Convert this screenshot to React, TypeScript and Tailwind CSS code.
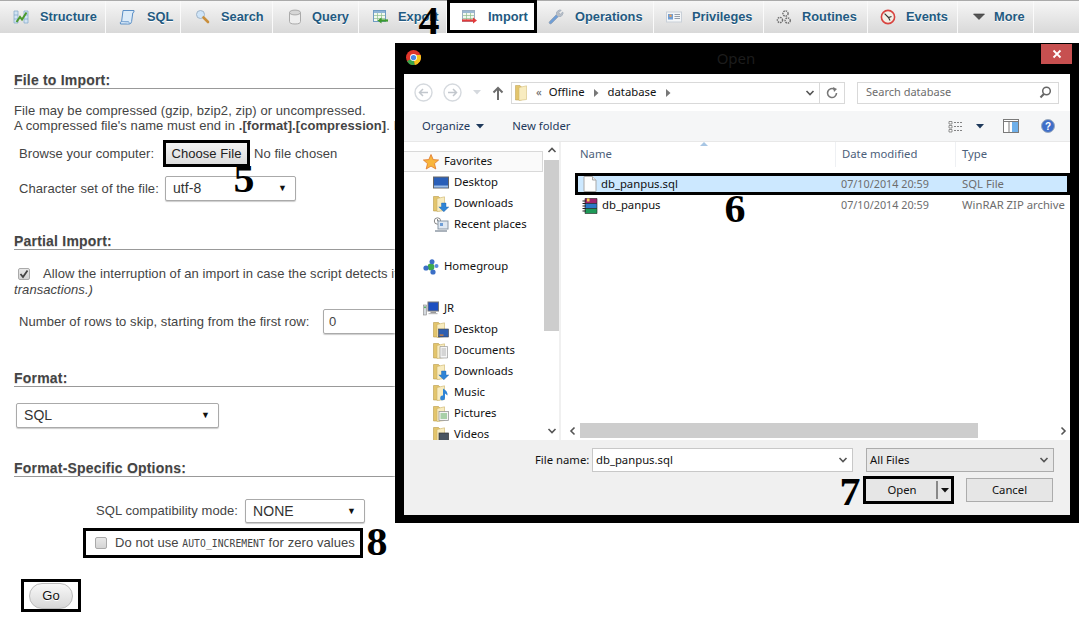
import React from "react";

const Sv = ({ w = 16, h = 16, children, className = "" }: { w?: number; h?: number; children: React.ReactNode; className?: string }) => (
  <svg width={w} height={h} viewBox={`0 0 ${w} ${h}`} className={`shrink-0 ${className}`}>{children}</svg>
);

const TableBase = ({ c = "#7a9cbc", head = "#8fb4d6" }: { c?: string; head?: string }) => (
  <>
    <rect x="1.5" y="1.5" width="12" height="11" fill="#f2f8ee" stroke={c} />
    <rect x="2" y="2" width="11" height="2" fill={head} />
    <path d="M2 6.5H13M2 9.5H13M5.5 4V12M9.5 4V12" stroke="#8fbf8f" strokeWidth="0.7" />
  </>
);

const tabIcons: Record<string, React.ReactNode> = {
  Structure: (
    <Sv>
      <path d="M1 2H5V14H1ZM11 2H15V14H11Z" fill="#d3e4f3" stroke="#7fa6c9" strokeWidth="0.7" />
      <path d="M1 6H5M1 10H5M11 6H15M11 10H15" stroke="#7fa6c9" strokeWidth="0.7" />
      <path d="M3.5 13L7 8L9 10.5L13.5 3.5" fill="none" stroke="#4b9a2c" strokeWidth="2" />
    </Sv>
  ),
  SQL: (
    <Sv>
      <path d="M4 1.5H15Q15.5 3.5 13.8 3.8L12.6 12.5Q12.2 15 10.2 15H1.5Q0.5 13 2.6 12.6Z" fill="#dcebf8" stroke="#5a8fc6" />
      <path d="M2.6 12.6H9.5Q10.5 13.5 10 15" fill="#c3daf0" stroke="#5a8fc6" strokeWidth="0.7" />
    </Sv>
  ),
  Search: (
    <Sv>
      <circle cx="5.5" cy="5.5" r="4" fill="#cfe4f7" stroke="#9fb4c8" />
      <path d="M8.5 8.5L13 13" stroke="#c98f3c" strokeWidth="2.6" strokeLinecap="round" />
    </Sv>
  ),
  Query: (
    <Sv>
      <path d="M2.5 3.5V12.5Q2.5 15 8 15T13.5 12.5V3.5Z" fill="#eeeeee" stroke="#aaaaaa" />
      <ellipse cx="8" cy="3.5" rx="5.5" ry="2.4" fill="#d6d6d6" stroke="#aaaaaa" />
    </Sv>
  ),
  Export: (
    <Sv>
      <TableBase c="#6f9cc4" head="#8fb4d6" />
      <path d="M16 11.5H8" stroke="#3d9a2e" strokeWidth="2.2" />
      <path d="M9.5 8.5L5.5 11.5L9.5 14.5Z" fill="#3d9a2e" />
    </Sv>
  ),
  Import: (
    <Sv>
      <TableBase c="#9aaec2" head="#9cb8d2" />
      <path d="M1 11.5H12" stroke="#e23b3b" strokeWidth="2.2" />
      <path d="M12 8.5L16 11.5L12 14.5Z" fill="#e23b3b" />
    </Sv>
  ),
  Operations: (
    <Sv>
      <path d="M1.5 14.5Q0.5 13.5 1.8 12.2L8.2 5.8Q8 2 11.5 1L13.2 1.2L10.6 3.8L12.2 5.4L14.8 3L15 4.8Q14 8 10.2 7.8L3.8 14.2Q2.6 15.5 1.5 14.5Z" fill="#6f9ed6" stroke="#8b97a6" strokeWidth="0.6" />
      <path d="M8.2 5.8Q8 2 11.5 1L13.2 1.2L10.6 3.8L12.2 5.4L14.8 3L15 4.8Q14 8 10.2 7.8Z" fill="#b9bec5" />
    </Sv>
  ),
  Privileges: (
    <Sv>
      <rect x="0.5" y="3" width="15" height="10" fill="#f4f6f8" stroke="#c9d0d8" />
      <rect x="2" y="5" width="5" height="5.5" fill="#6f9ed6" />
      <circle cx="4.5" cy="6.8" r="1.3" fill="#e8a05c" />
      <path d="M8.5 5.5H14M8.5 7.5H14M8.5 9.5H14" stroke="#8a94a0" strokeWidth="0.9" />
    </Sv>
  ),
  Routines: (
    <Sv>
      <g fill="none" stroke="#6e6e6e">
        <circle cx="9.5" cy="4.5" r="2.6" strokeDasharray="1.6 0.8" strokeWidth="1.4" />
        <circle cx="4" cy="11" r="2.6" strokeDasharray="1.6 0.8" strokeWidth="1.4" />
        <circle cx="11.7" cy="11.5" r="2.6" strokeDasharray="1.6 0.8" strokeWidth="1.4" />
      </g>
    </Sv>
  ),
  Events: (
    <Sv>
      <circle cx="8" cy="8" r="6.6" fill="#f3efe6" stroke="#d8433f" strokeWidth="1.6" />
      <path d="M4.6 4.6L8.5 8.5L11.5 7.5M8.5 8.5L10 11.5" fill="none" stroke="#333" strokeWidth="1.1" />
    </Sv>
  ),
  More: (
    <Sv h={10} w={14}>
      <path d="M1.5 2H12.5L7 7.5Z" fill="#555" stroke="#333" strokeWidth="0.6" />
    </Sv>
  ),
};

const Tab = ({ name, className, gap = "gap-[11px]" }: { name: string; className: string; gap?: string }) => (
  <div className={`flex items-center ${gap} h-full border-r border-[#fafafa] shrink-0 ${className}`}>
    {tabIcons[name]}
    <span className="font-bold text-[12.8px] text-[#235a81] [text-shadow:0_1px_0_#fff]">{name}</span>
  </div>
);

const Heading = ({ children, className }: { children: string; className: string }) => (
  <div className={`h-[18px] border-b border-[#999] font-bold text-[14px] tracking-[0.2px] leading-[18px] text-[#444] [text-shadow:0_1px_0_#ddd] ${className}`}>{children}</div>
);

const Caret = () => <span className="text-[#111] text-[9px] leading-none">▼</span>;

const Sel = ({ value, className }: { value: string; className: string }) => (
  <div className={`flex items-center justify-between border border-[#aaa] rounded-[2px] bg-white shadow-[0_1px_1px_#ccc] pl-[7px] pr-[8px] text-[14px] text-[#333] ${className}`}>
    <span>{value}</span>
    <Caret />
  </div>
);

const Check = ({ checked, className = "" }: { checked?: boolean; className?: string }) => (
  <span className={`flex items-center justify-center w-[12px] h-[12px] shrink-0 rounded-[2px] border border-[#aaa] bg-gradient-to-b from-[#e8e8e8] to-[#d4d4d4] ${className}`}>
    {checked && (
      <svg width="10" height="10" viewBox="0 0 10 10"><path d="M1.5 5L4 8L8.5 1.5" fill="none" stroke="#444" strokeWidth="1.8" /></svg>
    )}
  </span>
);

const Folder = ({ badge }: { badge?: React.ReactNode }) => (
  <Sv w={16} h={16}>
    <path d="M0.5 0.5H5.5L7 2V15H0.5Z" fill="#e3c56c" stroke="#b89a4a" strokeWidth="0.6" />
    <path d="M4 2.5L11.5 0.8V14.5L4 15.5Z" fill="#f8ecc0" stroke="#cdb469" strokeWidth="0.6" />
    {badge}
  </Sv>
);

const arrowBadge = <path d="M8.5 7H13V11H15.8L10.8 15.8L5.8 11H8.5Z" fill="#2f84d6" stroke="#1e5fa8" strokeWidth="0.4" />;

const NavItem = ({ icon, label, sub = true, className = "" }: { icon: React.ReactNode; label: string; sub?: boolean; className?: string }) => (
  <div className={`h-[21px] flex items-center shrink-0 ${sub ? "pl-[29px] gap-[5px]" : "pl-[19px] gap-[5px]"} ${className}`}>
    {icon}
    <span className="text-[11.3px] text-[#111] whitespace-nowrap">{label}</span>
  </div>
);

const ScrollChevron = ({ dir }: { dir: "up" | "down" | "left" | "right" }) => {
  const d = { up: "M1.5 6L5 2.5L8.5 6", down: "M1.5 3L5 6.5L8.5 3", left: "M6.5 1.5L3 5L6.5 8.5", right: "M3.5 1.5L7 5L3.5 8.5" }[dir];
  return (
    <svg width="10" height="10" viewBox="0 0 10 10" className="shrink-0"><path d={d} fill="none" stroke="#555" strokeWidth="1.6" /></svg>
  );
};

const Digit = ({ children, className }: { children: string; className: string }) => (
  <span className={`absolute font-bold text-black text-[40px] leading-none scale-x-105 [font-family:'Liberation_Serif',serif] ${className}`}>{children}</span>
);

const Dialog = () => (
  <div className="absolute left-[395px] top-[43px] w-[684px] h-[480px] bg-black flex flex-col pl-[9px] pr-[9px] pb-[8px] [font-family:'Noto_Sans',sans-serif] shadow-[0_0_3px_#fff]">
    {/* title */}
    <div className="h-[31px] shrink-0 flex items-start relative">
      <svg width="15" height="15" viewBox="0 0 16 16" className="mt-[7px] ml-[2px] mr-[2px] shrink-0">
        <circle cx="8" cy="8" r="8" fill="#e0352b" />
        <path d="M8 8L1 12A8 8 0 0 0 9.5 15.9Z" fill="#3aa54a" />
        <path d="M8 8L9.5 15.9A8 8 0 0 0 15.5 5.3H8Z" fill="#f6c51b" />
        <circle cx="8" cy="8" r="3.7" fill="#fff" />
        <circle cx="8" cy="8" r="2.8" fill="#4a86e8" />
      </svg>
      <div className="flex-1 text-center text-[15px] text-[#1c1c1c] pt-[4px] pl-[8px]">Open</div>
      <div className="w-[31px] h-[20px] mt-[1px] -mr-[2px] bg-[#c75050] flex items-center justify-center">
        <svg width="10" height="10" viewBox="0 0 10 10"><path d="M1.5 1.5L8.5 8.5M8.5 1.5L1.5 8.5" stroke="#fff" strokeWidth="1.8" /></svg>
      </div>
    </div>
    {/* nav */}
    <div className="h-[37px] shrink-0 bg-white flex items-center pl-[10px]">
      <svg width="19" height="19" viewBox="0 0 19 19" className="shrink-0"><circle cx="9.5" cy="9.5" r="8.5" fill="#fff" stroke="#d5d9de" strokeWidth="1.4" /><path d="M14 9.5H5.5M9 6L5.5 9.5L9 13" fill="none" stroke="#c2c7cd" strokeWidth="1.5" /></svg>
      <svg width="19" height="19" viewBox="0 0 19 19" className="ml-[10px] shrink-0"><circle cx="9.5" cy="9.5" r="8.5" fill="#fff" stroke="#d5d9de" strokeWidth="1.4" /><path d="M5 9.5H13.5M10 6L13.5 9.5L10 13" fill="none" stroke="#c2c7cd" strokeWidth="1.5" /></svg>
      <svg width="8" height="5" viewBox="0 0 8 5" className="ml-[11px] shrink-0"><path d="M0 0H8L4 4.5Z" fill="#d5d9de" /></svg>
      <svg width="12" height="14" viewBox="0 0 12 14" className="ml-[11px] shrink-0"><path d="M6 14V2M1.5 6.5L6 2L10.5 6.5" fill="none" stroke="#6d6d6d" strokeWidth="2" /></svg>
      <div className="ml-[7px] w-[334px] h-[22px] border border-[#d9d9d9] flex items-center text-[11.3px] text-[#111] shrink-0">
        <svg width="14" height="16" viewBox="0 0 14 16" className="ml-[3px] shrink-0"><path d="M0.5 0.5H5L6.5 2V15H0.5Z" fill="#e3c56c" stroke="#b89a4a" strokeWidth="0.5" /><path d="M4 2.5L11.5 0.8V14.5L4 15.5Z" fill="#f8ecc0" stroke="#cdb469" strokeWidth="0.5" /></svg>
        <span className="ml-[7px] text-[#666]">«</span>
        <span className="ml-[7px]">Offline</span>
        <svg width="5" height="8" viewBox="0 0 5 8" className="ml-[9px]"><path d="M0 0L4.5 4L0 8Z" fill="#777" /></svg>
        <span className="ml-[9px]">database</span>
        <svg width="5" height="8" viewBox="0 0 5 8" className="ml-[10px]"><path d="M0 0L4.5 4L0 8Z" fill="#777" /></svg>
        <div className="flex-1" />
        <ScrollChevron dir="down" />
        <div className="w-[25px] h-full border-l border-[#d9d9d9] ml-[4px] flex items-center justify-center">
          <svg width="12" height="12" viewBox="0 0 12 12"><path d="M10.5 6A4.5 4.5 0 1 1 8.5 2.3" fill="none" stroke="#777" strokeWidth="1.6" /><path d="M7 0L11 2L8 5Z" fill="#777" /></svg>
        </div>
      </div>
      <div className="ml-[12px] w-[202px] h-[22px] border border-[#d9d9d9] flex items-center justify-between pl-[8px] pr-[6px] text-[11px] text-[#6d6d6d] shrink-0">
        <span>Search database</span>
        <svg width="13" height="13" viewBox="0 0 13 13"><circle cx="7.5" cy="5" r="3.8" fill="none" stroke="#666" strokeWidth="1.5" /><path d="M4.8 8L1.5 11.5" stroke="#666" strokeWidth="2" /></svg>
      </div>
    </div>
    {/* toolbar */}
    <div className="h-[31px] shrink-0 bg-[#f5f6f7] border-b border-[#e8e8e8] flex items-center pl-[18px] text-[11.3px] text-[#1e395b]">
      <span>Organize</span>
      <svg width="8" height="5" viewBox="0 0 8 5" className="ml-[6px]"><path d="M0 0H8L4 4.5Z" fill="#1e395b" /></svg>
      <span className="ml-[28px]">New folder</span>
      <div className="flex-1" />
      <svg width="15" height="13" viewBox="0 0 15 13"><path d="M1 1.5H4V4H1ZM1 5.5H4V8H1ZM1 9.5H4V12H1Z" fill="#fff" stroke="#666" strokeWidth="0.7" /><path d="M6 2.5H15M6 6.5H15M6 10.5H15" stroke="#666" strokeWidth="0.8" strokeDasharray="2 1" /></svg>
      <svg width="8" height="5" viewBox="0 0 8 5" className="ml-[13px]"><path d="M0 0H8L4 4.5Z" fill="#1e395b" /></svg>
      <svg width="16" height="14" viewBox="0 0 16 14" className="ml-[19px]"><rect x="0.5" y="0.5" width="15" height="13" fill="#fff" stroke="#7a7a7a" /><rect x="9" y="2" width="6" height="11" fill="#6fb0ea" /><path d="M0.5 2.5H15.5M6 2.5V13.5" stroke="#7a7a7a" /></svg>
      <svg width="14" height="14" viewBox="0 0 14 14" className="ml-[22px] mr-[15px]"><circle cx="7" cy="7" r="6.5" fill="#3f6fc9" stroke="#9aa9bd" /><text x="7" y="10.5" textAnchor="middle" fontSize="10" fontWeight="700" fill="#fff" fontFamily="Liberation Sans">?</text></svg>
    </div>
    {/* body */}
    <div className="flex-1 min-h-0 flex bg-white">
      {/* sidebar */}
      <div className="w-[140px] shrink-0 flex flex-col overflow-hidden pt-[9px]">
        <div className="h-[21px] shrink-0 flex items-center gap-[5px] pl-[19px] border border-[#d9d9d9] border-l-0 bg-[#fafafa] mr-[1px]">
          <svg width="16" height="16" viewBox="0 0 16 16" className="shrink-0"><path d="M8 0.5L10.2 5.6L15.6 6L11.5 9.6L12.8 15L8 12.1L3.2 15L4.5 9.6L0.4 6L5.8 5.6Z" fill="#f8b53c" stroke="#e0762a" strokeWidth="0.8" /></svg>
          <span className="text-[11.3px] text-[#111]">Favorites</span>
        </div>
        <NavItem label="Desktop" icon={<Sv><rect x="0.5" y="2" width="15" height="11" fill="#2a5fb8" stroke="#666" /><rect x="1" y="10.5" width="14" height="2" fill="#9fc0e8" /></Sv>} />
        <NavItem label="Downloads" icon={<Folder badge={arrowBadge} />} />
        <NavItem label="Recent places" icon={<Sv><circle cx="4.5" cy="4" r="3.2" fill="#fff" stroke="#888" /><path d="M4.5 2V4H6" fill="none" stroke="#555" strokeWidth="0.7" /><rect x="5" y="4" width="10" height="8" fill="#dfe8f2" stroke="#8a97a5" /><rect x="7" y="6" width="3" height="3" fill="#6f9ed6" /><rect x="2" y="13" width="12" height="2" fill="#aab2bb" /></Sv>} />
        <div className="h-[21px] shrink-0" />
        <NavItem sub={false} label="Homegroup" icon={<Sv><circle cx="8" cy="8" r="3.4" fill="#3eaa4c" /><circle cx="3" cy="9" r="2.6" fill="#3b6fc6" /><circle cx="9" cy="2.8" r="2.5" fill="#3b6fc6" /><circle cx="10" cy="13" r="2.6" fill="#3b6fc6" /><circle cx="13.5" cy="7" r="2" fill="#5c8cdc" /></Sv>} />
        <div className="h-[21px] shrink-0" />
        <NavItem sub={false} label="JR" icon={<Sv><rect x="5" y="1" width="10.5" height="9" fill="#1d4fc0" stroke="#777" /><rect x="7.5" y="10.5" width="5.5" height="1.5" fill="#999" /><rect x="5.5" y="12" width="9" height="1.2" fill="#bbb" /><rect x="0.5" y="4" width="3" height="10" fill="#d5dadf" stroke="#888" strokeWidth="0.6" /><rect x="1.2" y="5.5" width="1.6" height="1.6" fill="#3eaa4c" /></Sv>} />
        <NavItem label="Desktop" icon={<Folder badge={<><rect x="5.5" y="7" width="10" height="8" fill="#2f5fb0" stroke="#444" strokeWidth="0.6" /><rect x="6.5" y="12.5" width="4" height="1.2" fill="#e8852c" /></>} />} />
        <NavItem label="Documents" icon={<Folder badge={<path d="M7 3.5H14.5V15H7Z M8.5 6H13M8.5 8H13M8.5 10H13M8.5 12H13" fill="#f6f6f6" stroke="#8a8a8a" strokeWidth="0.6" />} />} />
        <NavItem label="Downloads" icon={<Folder badge={arrowBadge} />} />
        <NavItem label="Music" icon={<Folder badge={<path d="M10 3.5Q15 6 14.5 10.5L12 8.5V13A2.4 2.4 0 1 1 10 10.6Z" fill="#2f84d6" />} />} />
        <NavItem label="Pictures" icon={<Folder badge={<><rect x="6" y="5.5" width="9.5" height="9" fill="#f4f4f4" stroke="#8a8a8a" strokeWidth="0.7" /><rect x="7.5" y="7" width="6.5" height="6" fill="#a9d0a8" /></>} />} />
        <NavItem label="Videos" icon={<Folder badge={<rect x="6" y="6" width="9.5" height="9" fill="#4a5562" stroke="#333" strokeWidth="0.7" />} />} />
      </div>
      {/* sidebar scrollbar */}
      <div className="w-[15px] shrink-0 flex flex-col items-center bg-white">
        <div className="h-[18px] flex items-center shrink-0"><ScrollChevron dir="up" /></div>
        <div className="w-full h-[171px] bg-[#cdcdcd] shrink-0" />
        <div className="flex-1" />
        <div className="h-[15px] flex items-center shrink-0 mb-[2px]"><ScrollChevron dir="down" /></div>
      </div>
      <div className="w-[2px] shrink-0 bg-[#f0f0f0]" />
      {/* file list */}
      <div className="flex-1 min-w-0 flex flex-col text-[11.3px] relative">
        <div className="h-[25px] mb-[6px] shrink-0 flex items-center text-[#4c607a] relative">
          <span className="w-[274px] pl-[19px] shrink-0">Name</span>
          <svg width="8" height="4" viewBox="0 0 8 4" className="absolute left-[139px] top-0"><path d="M4 0L8 4H0Z" fill="#a8c6e4" /></svg>
          <span className="w-[120px] h-full shrink-0 flex items-center pl-[6px] border-l border-[#eef0f3]">Date modified</span>
          <span className="h-full flex-1 flex items-center pl-[6px] border-l border-[#eef0f3]">Type</span>
        </div>
        <div className="h-[22px] shrink-0 ml-[14px] border-[3px] border-black bg-[#cce8ff] flex items-center">
          <span className="w-[263px] shrink-0 flex items-center gap-[4px] pl-[5px] text-[#111]">
            <svg width="14" height="16" viewBox="0 0 14 16" className="shrink-0"><path d="M1 0.5H9.5L13 4V15.5H1Z" fill="#fdfdfd" stroke="#a8a8a8" /><path d="M9.5 0.5V4H13" fill="#eee" stroke="#a8a8a8" /></svg>
            db_panpus.sql
          </span>
          <span className="w-[121px] shrink-0 text-[10.8px] text-[#6d6d6d]">07/10/2014 20:59</span>
          <span className="text-[#6d6d6d]">SQL File</span>
        </div>
        <div className="h-[21px] shrink-0 ml-[14px] flex items-center">
          <span className="w-[266px] shrink-0 flex items-center gap-[4px] pl-[7px] text-[#111]">
            <svg width="16" height="16" viewBox="0 0 16 16" className="shrink-0">
              <path d="M3 0.5H15V5.5H3Z" fill="#a0236b" stroke="#222" strokeWidth="0.6" />
              <path d="M3 5.5H15V10.5H3Z" fill="#2a78c8" stroke="#222" strokeWidth="0.6" />
              <path d="M3 10.5H15V15.5H3Z" fill="#1e9a58" stroke="#222" strokeWidth="0.6" />
              <path d="M0.5 3H4M0.5 5.5H4M0.5 8H4M0.5 10.5H4M0.5 13H4" stroke="#222" strokeWidth="1" />
              <rect x="5" y="0.5" width="2.5" height="3" fill="#f2d24a" />
            </svg>
            db_panpus
          </span>
          <span className="w-[121px] shrink-0 text-[10.8px] text-[#6d6d6d]">07/10/2014 20:59</span>
          <span className="text-[#6d6d6d] whitespace-nowrap">WinRAR ZIP archive</span>
        </div>
        <div className="flex-1" />
        <div className="h-[15px] shrink-0 flex items-center ml-[4px] mb-[2px]">
          <span className="w-[15px] flex justify-center shrink-0"><ScrollChevron dir="left" /></span>
          <div className="w-[398px] h-full bg-[#cdcdcd] shrink-0" />
          <div className="flex-1" />
          <span className="w-[15px] flex justify-center shrink-0"><ScrollChevron dir="right" /></span>
        </div>
      </div>
    </div>
    {/* footer */}
    <div className="h-[75px] shrink-0 bg-[#f0f0f0] flex flex-col relative">
      <div className="flex items-center mt-[8px] h-[24px] text-[11.3px] text-[#111]">
        <span className="ml-[131px] w-[57px] shrink-0 whitespace-nowrap">File name:</span>
        <div className="w-[261px] h-full border border-[#c8c8c8] bg-white flex items-center justify-between pl-[3px] pr-[4px] shrink-0">
          <span>db_panpus.sql</span>
          <ScrollChevron dir="down" />
        </div>
        <div className="ml-[13px] w-[188px] h-full border border-[#acacac] bg-[#e8e8e8] flex items-center justify-between pl-[3px] pr-[4px] shrink-0">
          <span>All Files</span>
          <ScrollChevron dir="down" />
        </div>
      </div>
      <div className="flex items-start mt-[4px] text-[11.3px] text-[#111]">
        <div className="ml-[459px] w-[91px] h-[28px] border-[3px] border-black bg-[#e6e6e6] flex items-center shrink-0">
          <span className="flex-1 text-center pl-[2px]">Open</span>
          <div className="w-[15px] h-[18px] border-l-2 border-[#888] flex items-center justify-center">
            <svg width="8" height="5" viewBox="0 0 8 5"><path d="M0 0H8L4 4.5Z" fill="#111" /></svg>
          </div>
        </div>
        <div className="ml-[12px] w-[87px] h-[24px] mt-[2px] border border-[#acacac] bg-[#e6e6e6] flex items-center justify-center shrink-0">Cancel</div>
      </div>
    </div>
  </div>
);

export default function App() {
  return (
    <div className="relative w-[1079px] h-[624px] overflow-hidden bg-white [font-family:'Liberation_Sans',Arial,sans-serif] text-[#444]">
      {/* tab bar */}
      <div className="h-[33px] flex border-t border-[#aaa] bg-gradient-to-b from-[#f6f6f6] to-[#d9d9d9]">
        <Tab name="Structure" className="w-[106px] pl-[13px]" />
        <Tab name="SQL" gap="gap-[12px]" className="w-[75px] pl-[13px]" />
        <Tab name="Search" gap="gap-[10px]" className="w-[92px] pl-[14px]" />
        <Tab name="Query" gap="gap-[9px]" className="w-[86px] pl-[14px]" />
        <Tab name="Export" gap="gap-[10px]" className="w-[88px] pl-[13px]" />
        <div className="w-[90px] shrink-0 h-[33px] -mt-[1px] border-[3px] border-black bg-white flex items-center gap-[11px] pl-[11px]">
          {tabIcons.Import}
          <span className="font-bold text-[12.8px] text-[#235a81]">Import</span>
        </div>
        <Tab name="Operations" className="w-[117px] pl-[11px]" />
        <Tab name="Privileges" gap="gap-[10px]" className="w-[110px] pl-[12px]" />
        <Tab name="Routines" gap="gap-[10px]" className="w-[104px] pl-[12px]" />
        <Tab name="Events" gap="gap-[10px]" className="w-[90px] pl-[12px]" />
        <Tab name="More" gap="gap-[8px]" className="w-[76px] pl-[14px]" />
      </div>

      {/* page */}
      <div className="px-[14px] flex flex-col text-[13px] tracking-[0.07px] whitespace-nowrap">
        <Heading className="mt-[38px]">File to Import:</Heading>
        <div className="mt-[14px] leading-[15px]">
          <div>File may be compressed (gzip, bzip2, zip) or uncompressed.</div>
          <div>A compressed file's name must end in <b>.[format].[compression]</b>. Example: <b>.sql.zip</b></div>
        </div>
        <div className="mt-[7px] h-[27px] flex items-center pl-[5px]">
          <span className="w-[144px] shrink-0">Browse your computer:</span>
          <div className="w-[87px] h-[27px] border-[3px] border-black bg-gradient-to-b from-[#f4f4f4] to-[#dcdcdc] text-[#222] flex items-center justify-center shrink-0">Choose File</div>
          <span className="ml-[4px]">No file chosen</span>
        </div>
        <div className="mt-[9px] h-[25px] flex items-center pl-[5px]">
          <span className="w-[146px] shrink-0">Character set of the file:</span>
          <Sel value="utf-8" className="w-[131px] h-[25px]" />
        </div>

        <Heading className="mt-[31px]">Partial Import:</Heading>
        <div className="mt-[16px] leading-[15.5px]">
          <div className="flex items-center pl-[4px]">
            <Check checked />
            <span className="ml-[13px]">Allow the interruption of an import in case the script detects it is close to the PHP timeout limit.</span>
          </div>
          <div className="italic">transactions.)</div>
        </div>
        <div className="mt-[12px] h-[25px] flex items-center pl-[5px]">
          <span className="w-[304px] shrink-0">Number of rows to skip, starting from the first row:</span>
          <div className="w-[100px] h-[25px] border border-[#aaa] rounded-[2px] shadow-[0_1px_1px_#ccc] flex items-center pl-[5px]">0</div>
        </div>

        <Heading className="mt-[35px]">Format:</Heading>
        <Sel value="SQL" className="mt-[16px] ml-[2px] w-[203px] h-[25px]" />

        <Heading className="mt-[31px]">Format-Specific Options:</Heading>
        <div className="mt-[22px] h-[24px] flex items-center pl-[82px]">
          <span className="w-[149px] shrink-0">SQL compatibility mode:</span>
          <Sel value="NONE" className="w-[120px] h-[24px]" />
        </div>
        <div className="mt-[5px] ml-[69px] w-[280px] h-[30px] border-[3px] border-black flex items-center pl-[9px]">
          <Check />
          <span className="ml-[8px]">Do not use <code className="text-[9.7px] [font-family:'DejaVu_Sans_Mono',monospace]">AUTO_INCREMENT</code> for zero values</span>
        </div>
        <div className="mt-[21px] ml-[7px] w-[60px] h-[33px] border-[3px] border-black flex items-center justify-center">
          <div className="w-[44px] h-[26px] rounded-full border border-[#bbb] bg-gradient-to-b from-[#f8f8f8] to-[#d8d8d8] text-[#111] flex items-center justify-center [text-shadow:0_1px_0_#fff]">Go</div>
        </div>
      </div>

      <Dialog />

      <Digit className="left-[419px] top-[1px]">4</Digit>
      <Digit className="left-[234px] top-[159px]">5</Digit>
      <Digit className="left-[725px] top-[189px]">6</Digit>
      <Digit className="left-[840px] top-[472px]">7</Digit>
      <Digit className="left-[367px] top-[522px]">8</Digit>
    </div>
  );
}
